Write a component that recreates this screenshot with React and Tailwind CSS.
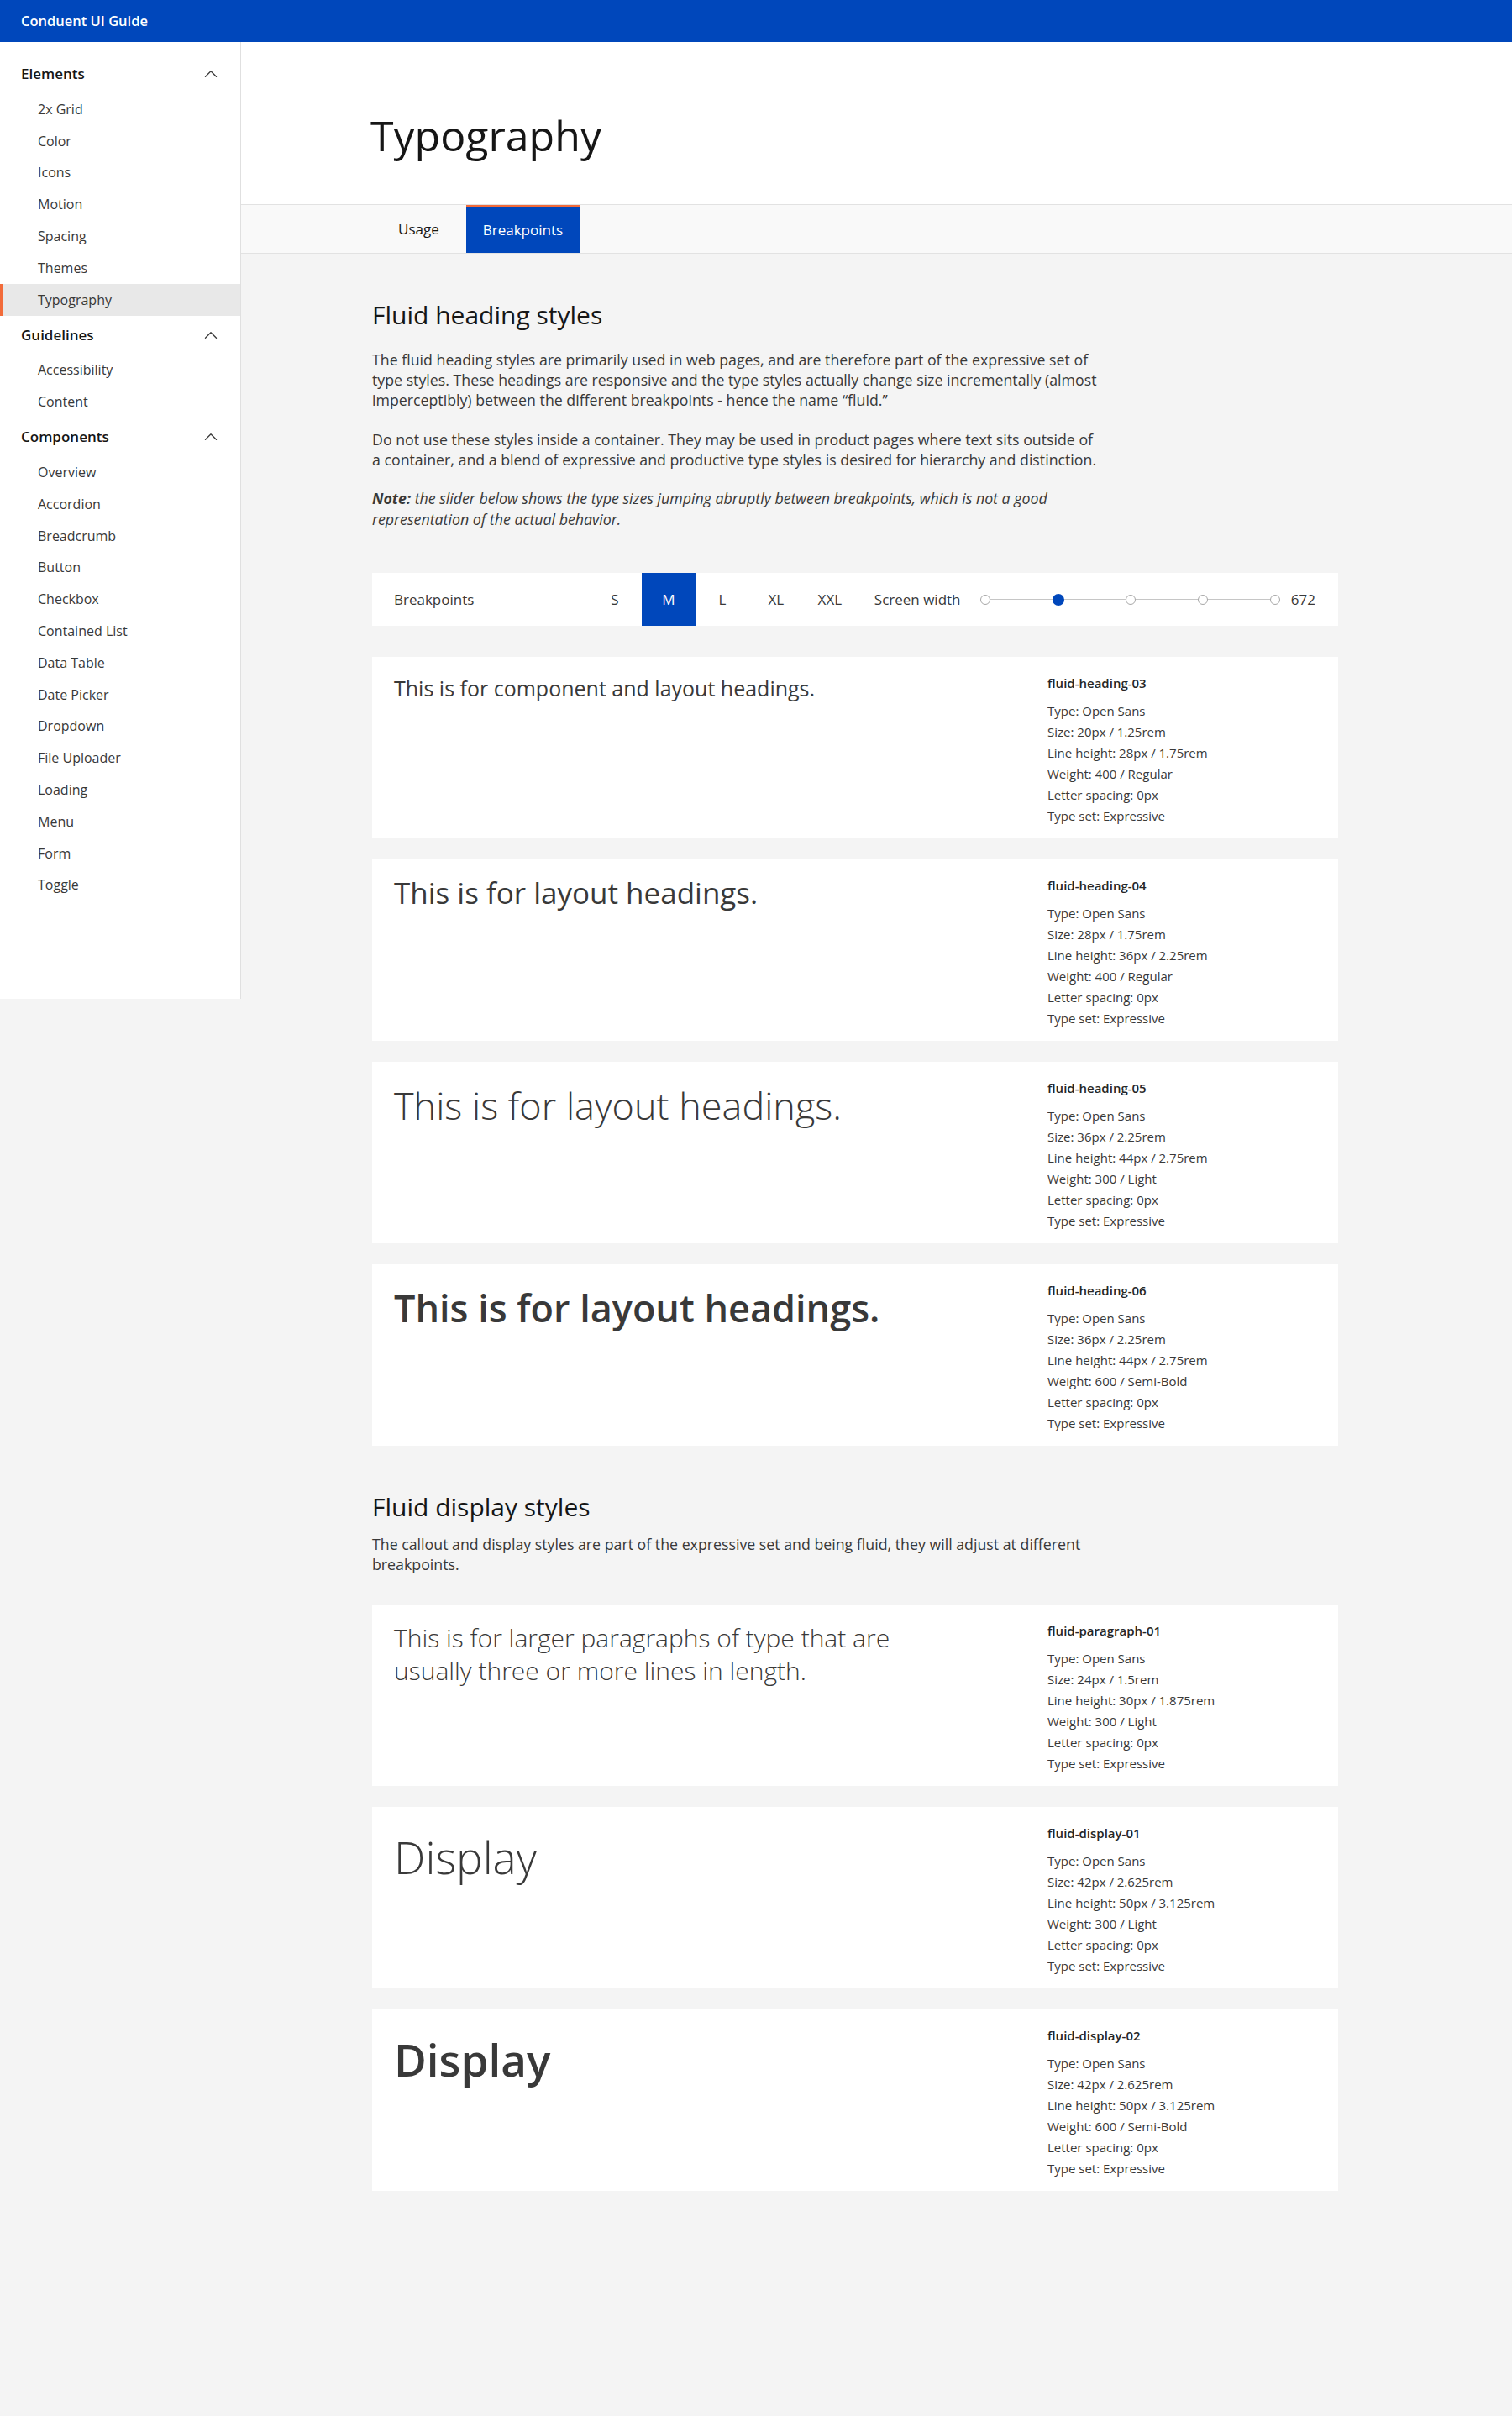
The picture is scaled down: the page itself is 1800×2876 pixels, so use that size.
import React from "react";
import { ChevronUp } from "lucide-react";

const nav = [
  {
    title: "Elements",
    items: ["2x Grid", "Color", "Icons", "Motion", "Spacing", "Themes", "Typography"],
  },
  { title: "Guidelines", items: ["Accessibility", "Content"] },
  {
    title: "Components",
    items: [
      "Overview",
      "Accordion",
      "Breadcrumb",
      "Button",
      "Checkbox",
      "Contained List",
      "Data Table",
      "Date Picker",
      "Dropdown",
      "File Uploader",
      "Loading",
      "Menu",
      "Form",
      "Toggle",
    ],
  },
];

function Sidebar() {
  return (
    <aside className="w-[287px] shrink-0 self-start bg-white border-r border-[#e0e0e0] pt-[15px] pb-[117px]">
      {nav.map((g) => (
        <div key={g.title}>
          <div className="h-[46px] flex items-center justify-between pl-[25px] pr-[22px]">
            <span className="text-[17px] font-semibold text-[#161616]">{g.title}</span>
            <ChevronUp size={26} strokeWidth={1.2} className="text-[#393939]" />
          </div>
          {g.items.map((it) =>
            it === "Typography" ? (
              <div
                key={it}
                className="h-[37.8px] flex items-center pl-[41px] border-l-4 border-[#f26b3a] bg-[#e8e8e8] text-[16px] text-[#393939]"
              >
                {it}
              </div>
            ) : (
              <div key={it} className="h-[37.8px] flex items-center pl-[45px] text-[16px] text-[#393939]">
                {it}
              </div>
            )
          )}
        </div>
      ))}
    </aside>
  );
}

function Card({ name, meta, children }) {
  return (
    <div className="flex h-[216px] bg-white">
      <div className="flex-1 pl-[26px] pt-5 text-[#393939]">{children}</div>
      <div className="w-[372px] border-l border-[#e0e0e0] pl-[25px] pt-5">
        <div className="text-[15px] leading-[22px] font-semibold text-[#262626]">{name}</div>
        <div className="mt-[10px] text-[15px] leading-[25px] text-[#393939]">
          {meta.map((m) => (
            <div key={m}>{m}</div>
          ))}
        </div>
      </div>
    </div>
  );
}

function meta(size, lh, weight) {
  return [
    "Type: Open Sans",
    `Size: ${size}`,
    `Line height: ${lh}`,
    `Weight: ${weight}`,
    "Letter spacing: 0px",
    "Type set: Expressive",
  ];
}

function BreakpointBar() {
  const bps = ["S", "M", "L", "XL", "XXL"];
  return (
    <div className="mt-[51px] flex items-center h-[63px] bg-white pl-[26px] pr-[27px] text-[17px] text-[#393939]">
      <div className="flex-1">Breakpoints</div>
      <div className="flex h-full">
        {bps.map((b) =>
          b === "M" ? (
            <div key={b} className="w-16 h-full flex items-center justify-center bg-[#0047bb] text-white">
              {b}
            </div>
          ) : (
            <div key={b} className="w-16 h-full flex items-center justify-center">
              {b}
            </div>
          )
        )}
      </div>
      <div className="ml-[21px] w-[105px] whitespace-nowrap">Screen width</div>
      <div className="ml-[21px] relative w-[357px] h-[14px] flex items-center justify-between">
        <div className="absolute left-[6px] right-[6px] top-[6.5px] h-px bg-[#c6c6c6]" />
        <span className="relative w-3 h-3 rounded-full border-[1.5px] border-[#a8a8a8] bg-white" />
        <span className="relative w-[14px] h-[14px] rounded-full bg-[#0047bb]" />
        <span className="relative w-3 h-3 rounded-full border-[1.5px] border-[#a8a8a8] bg-white" />
        <span className="relative w-3 h-3 rounded-full border-[1.5px] border-[#a8a8a8] bg-white" />
        <span className="relative w-3 h-3 rounded-full border-[1.5px] border-[#a8a8a8] bg-white" />
      </div>
      <div className="ml-[13px]">672</div>
    </div>
  );
}

export default function App() {
  return (
    <div className="min-h-[2876px] bg-[#f4f4f4] font-['Open_Sans',sans-serif]">
      <header className="h-[50px] bg-[#0047bb] flex items-center pl-[25px] text-white text-[16.5px] font-semibold">
        Conduent UI Guide
      </header>
      <div className="flex">
        <Sidebar />
        <main className="flex-1">
          <div className="bg-white pt-[81px] pb-[52px] pl-[154px]">
            <h1 className="text-[50px] leading-[60px] font-normal text-[#161616]">Typography</h1>
          </div>
          <div className="h-[59px] bg-[#f9f9f9] border-t border-b border-[#e2e2e2] flex pl-[155px] text-[17px]">
            <div className="px-8 flex items-center text-[#161616]">Usage</div>
            <div className="px-5 flex items-center bg-[#0047bb] text-white border-t-2 border-[#f26b3a]">
              Breakpoints
            </div>
          </div>

          <div className="pl-[156px] pt-[53px] pb-[100px]">
            <div className="w-[1150px]">
              <h2 className="text-[30px] leading-[40px] text-[#161616]">Fluid heading styles</h2>
              <div className="max-w-[872px] text-[17.75px] text-[#393939]">
                <p className="mt-[21px] leading-[24px]">
                  The fluid heading styles are primarily used in web pages, and are therefore part of the expressive
                  set of type styles. These headings are responsive and the type styles actually change size
                  incrementally (almost imperceptibly) between the different breakpoints - hence the name “fluid.”
                </p>
                <p className="mt-[23px] leading-[24px]">
                  Do not use these styles inside a container. They may be used in product pages where text sits
                  outside of a container, and a blend of expressive and productive type styles is desired for
                  hierarchy and distinction.
                </p>
                <p className="mt-[22px] leading-[25px] italic">
                  <span className="font-bold">Note:</span> the slider below shows the type sizes jumping abruptly
                  between breakpoints, which is not a good representation of the actual behavior.
                </p>
              </div>

              <BreakpointBar />

              <div className="mt-[37px] flex flex-col gap-[25px]">
                <Card name="fluid-heading-03" meta={meta("20px / 1.25rem", "28px / 1.75rem", "400 / Regular")}>
                  <div className="text-[25px] leading-[34px] font-normal">
                    This is for component and layout headings.
                  </div>
                </Card>
                <Card name="fluid-heading-04" meta={meta("28px / 1.75rem", "36px / 2.25rem", "400 / Regular")}>
                  <div className="text-[35px] leading-[40px] font-normal">This is for layout headings.</div>
                </Card>
                <Card name="fluid-heading-05" meta={meta("36px / 2.25rem", "44px / 2.75rem", "300 / Light")}>
                  <div className="text-[45px] leading-[64px] font-light">This is for layout headings.</div>
                </Card>
                <Card name="fluid-heading-06" meta={meta("36px / 2.25rem", "44px / 2.75rem", "600 / Semi-Bold")}>
                  <div className="text-[45px] leading-[64px] font-semibold">This is for layout headings.</div>
                </Card>
              </div>

              <h2 className="mt-[53px] text-[30px] leading-[40px] text-[#161616]">Fluid display styles</h2>
              <p className="mt-3 max-w-[872px] text-[17.75px] leading-[24px] text-[#393939]">
                The callout and display styles are part of the expressive set and being fluid, they will adjust at
                different breakpoints.
              </p>

              <div className="mt-9 flex flex-col gap-[25px]">
                <Card name="fluid-paragraph-01" meta={meta("24px / 1.5rem", "30px / 1.875rem", "300 / Light")}>
                  <div className="max-w-[660px] text-[30px] leading-[39px] font-light">
                    This is for larger paragraphs of type that are usually three or more lines in length.
                  </div>
                </Card>
                <Card name="fluid-display-01" meta={meta("42px / 2.625rem", "50px / 3.125rem", "300 / Light")}>
                  <div className="text-[53px] leading-[80px] font-light">Display</div>
                </Card>
                <Card name="fluid-display-02" meta={meta("42px / 2.625rem", "50px / 3.125rem", "600 / Semi-Bold")}>
                  <div className="text-[53px] leading-[80px] font-semibold">Display</div>
                </Card>
              </div>
            </div>
          </div>
        </main>
      </div>
    </div>
  );
}
